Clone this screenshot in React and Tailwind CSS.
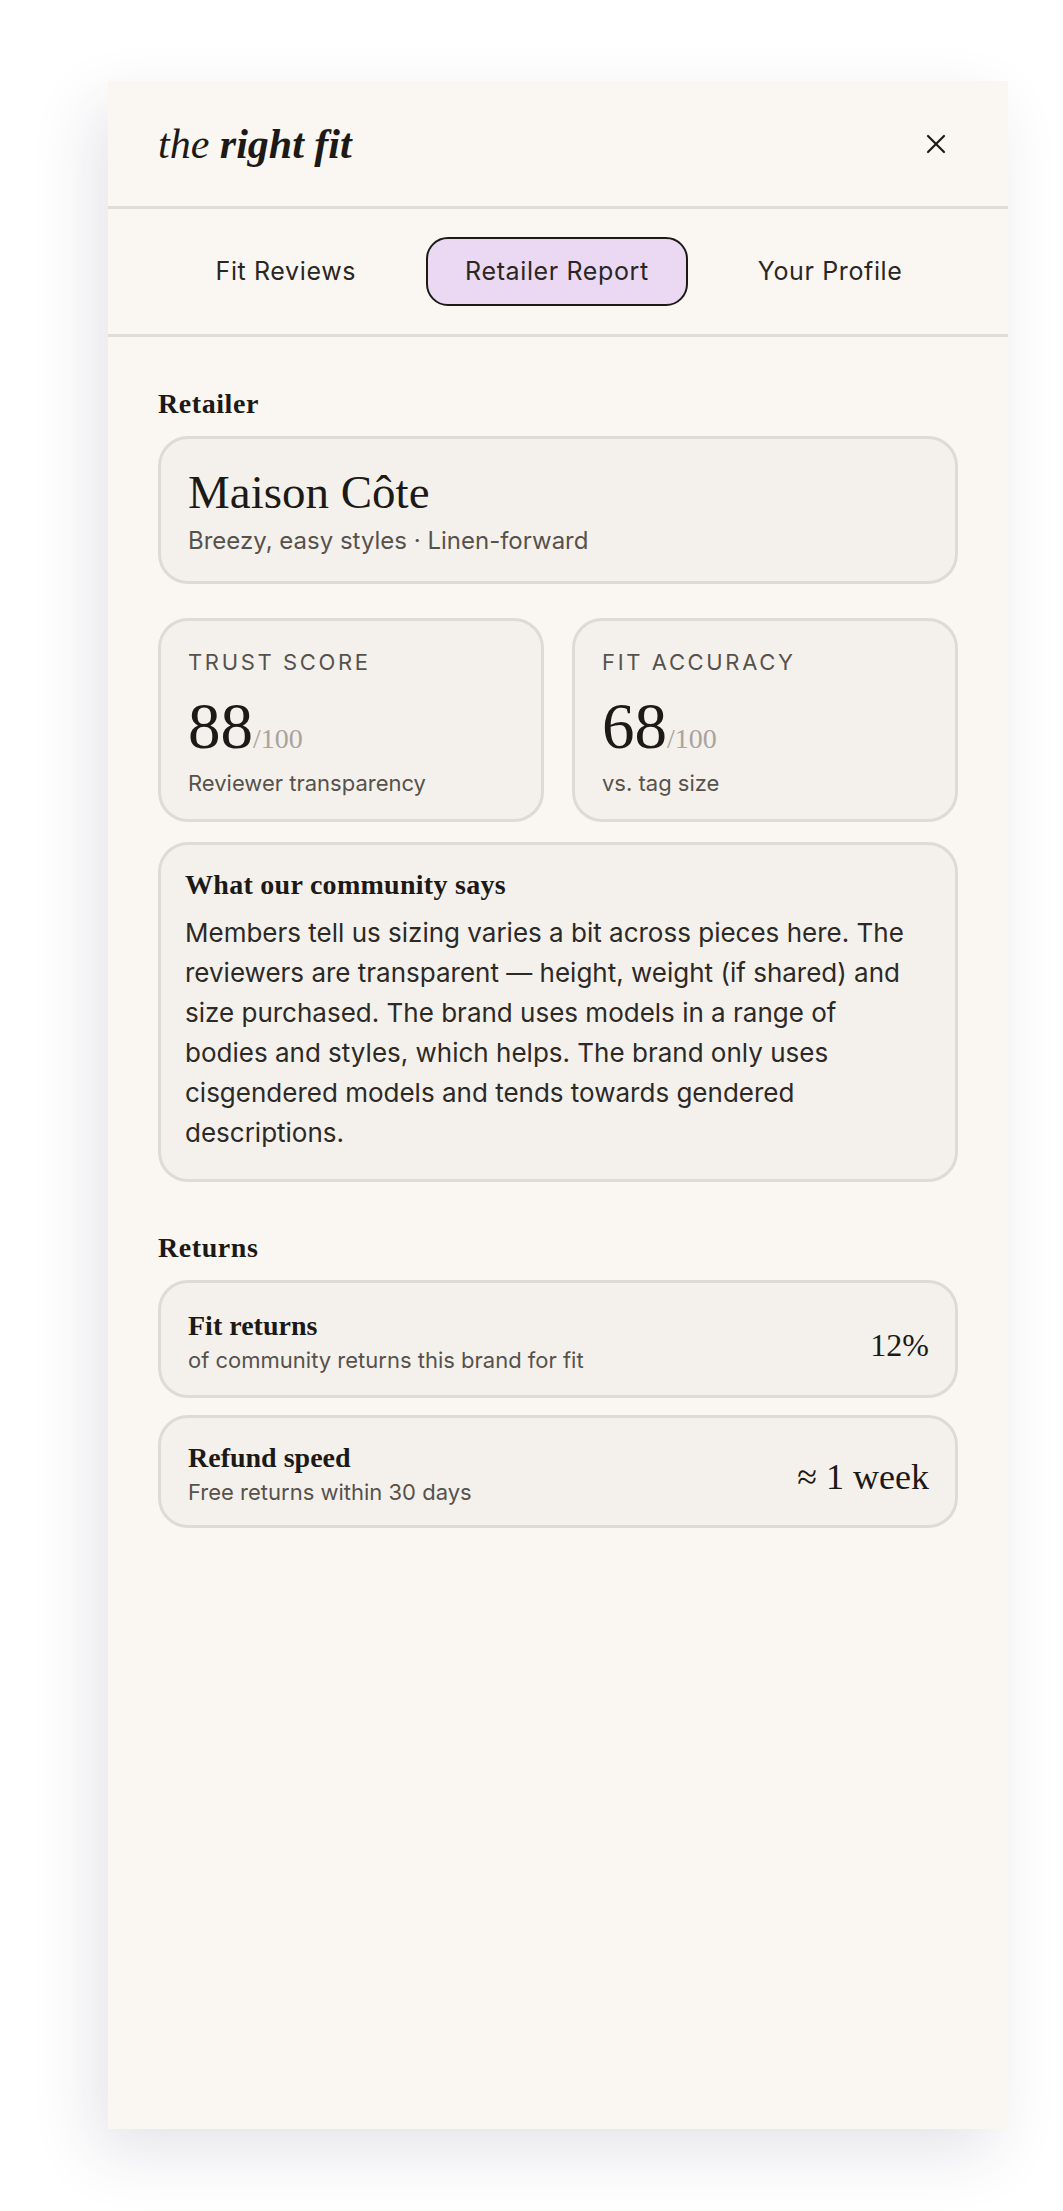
import React from 'react';
import { X } from 'lucide-react';

const serif = "font-['Liberation_Serif',serif]";
const sans = "font-['Inter',sans-serif]";

function Tab({ label, active }) {
  return (
    <button
      className={`h-[69px] px-[37px] rounded-[22px] text-[25px] tracking-[0.025em] text-[#2a2623] ${sans} ${
        active ? 'bg-[#ebd9f3] border-2 border-[#1c1917]' : 'border-2 border-transparent'
      }`}
    >
      {label}
    </button>
  );
}

function ScoreCard({ label, value, note }) {
  return (
    <div className="rounded-[30px] border-[3px] border-[#e0dad4] bg-[#f4f1ec] px-[27px] pt-[27px] pb-[22px]">
      <div className={`${sans} text-[22px] leading-[28px] tracking-[0.12em] text-[#57514c]`}>{label}</div>
      <div className={`${serif} mt-[17px] flex items-baseline`}>
        <span className="text-[65px] leading-[66px] text-[#1c1917]">{value}</span>
        <span className="text-[28px] leading-[28px] text-[#aaa39c]">/100</span>
      </div>
      <div className={`${sans} mt-[10px] text-[22px] leading-[28px] text-[#57514c]`}>{note}</div>
    </div>
  );
}

function ReturnRow({ title, sub, value, valueSize, pad }) {
  return (
    <div className={`flex items-center justify-between rounded-[30px] border-[3px] border-[#e0dad4] bg-[#f4f1ec] pl-[27px] pr-[26px] ${pad}`}>
      <div>
        <div className={`${serif} text-[28px] leading-[26px] font-bold text-[#1c1917]`}>{title}</div>
        <div className={`${sans} mt-[8px] text-[22px] leading-[26px] text-[#57514c]`}>{sub}</div>
      </div>
      <div className={`${serif} ${valueSize} leading-[38px] pt-[4px] text-[#1c1917]`}>{value}</div>
    </div>
  );
}

export default function App() {
  return (
    <div className="min-h-[2211px] bg-white pt-[81px] pl-[108px]">
      <div className="w-[900px] h-[2048px] bg-[#faf7f3] shadow-[-14px_24px_60px_rgba(40,44,80,0.12)] flex flex-col">
        {/* header */}
        <div className="h-[128px] border-b-[3px] border-[#e3dcd5] px-[50px] flex items-center justify-between">
          <div className={`${serif} italic text-[42px] text-[#1c1917] pt-[2px]`}>
            the <span className="font-bold">right fit</span>
          </div>
          <button className="w-11 h-11 flex items-center justify-center text-[#1c1917]">
            <X size={32} strokeWidth={1.6} />
          </button>
        </div>

        {/* tabs */}
        <div className="h-[128px] border-b-[3px] border-[#e3dcd5] flex items-center justify-center gap-[31px] pl-[2px]">
          <Tab label="Fit Reviews" />
          <Tab label="Retailer Report" active />
          <Tab label="Your Profile" />
        </div>

        <div className="px-[50px] pt-[53px]">
          <h3 className={`${serif} text-[28px] leading-[27px] tracking-[0.02em] font-bold text-[#1c1917]`}>Retailer</h3>
          <div className="mt-[19px] rounded-[30px] border-[3px] border-[#e0dad4] bg-[#f4f1ec] px-[27px] pt-[30px] pb-[26px]">
            <div className={`${serif} text-[47px] leading-[47px] text-[#1c1917]`}>Maison Côte</div>
            <div className={`${sans} mt-[11px] text-[24px] leading-[28px] text-[#57514c]`}>
              Breezy, easy styles · Linen-forward
            </div>
          </div>

          <div className="mt-[34px] grid grid-cols-2 gap-[28px]">
            <ScoreCard label="TRUST SCORE" value="88" note="Reviewer transparency" />
            <ScoreCard label="FIT ACCURACY" value="68" note="vs. tag size" />
          </div>

          <div className="mt-[20px] rounded-[30px] border-[3px] border-[#e0dad4] bg-[#f4f1ec] pl-[24px] pr-[36px] pt-[26px] pb-[26px]">
            <div className={`${serif} text-[28px] leading-[27px] tracking-[0.01em] font-bold text-[#1c1917]`}>
              What our community says
            </div>
            <p className={`${sans} mt-[15px] text-[26px] leading-[40px] text-[#2d2926]`}>
              Members tell us sizing varies a bit across pieces here. The reviewers are transparent — height, weight (if
              shared) and size purchased. The brand uses models in a range of bodies and styles, which helps. The brand
              only uses cisgendered models and tends towards gendered descriptions.
            </p>
          </div>

          <h3 className={`${serif} mt-[52px] text-[28px] leading-[27px] tracking-[0.02em] font-bold text-[#1c1917]`}>Returns</h3>
          <div className="mt-[19px] flex flex-col gap-[17px]">
            <ReturnRow
              title="Fit returns"
              sub="of community returns this brand for fit"
              value="12%"
              valueSize="text-[32px]"
              pad="pt-[30px] pb-[22px]"
            />
            <ReturnRow
              title="Refund speed"
              sub="Free returns within 30 days"
              value="≈ 1 week"
              valueSize="text-[36px]"
              pad="pt-[27px] pb-[20px]"
            />
          </div>
        </div>
      </div>
    </div>
  );
}
